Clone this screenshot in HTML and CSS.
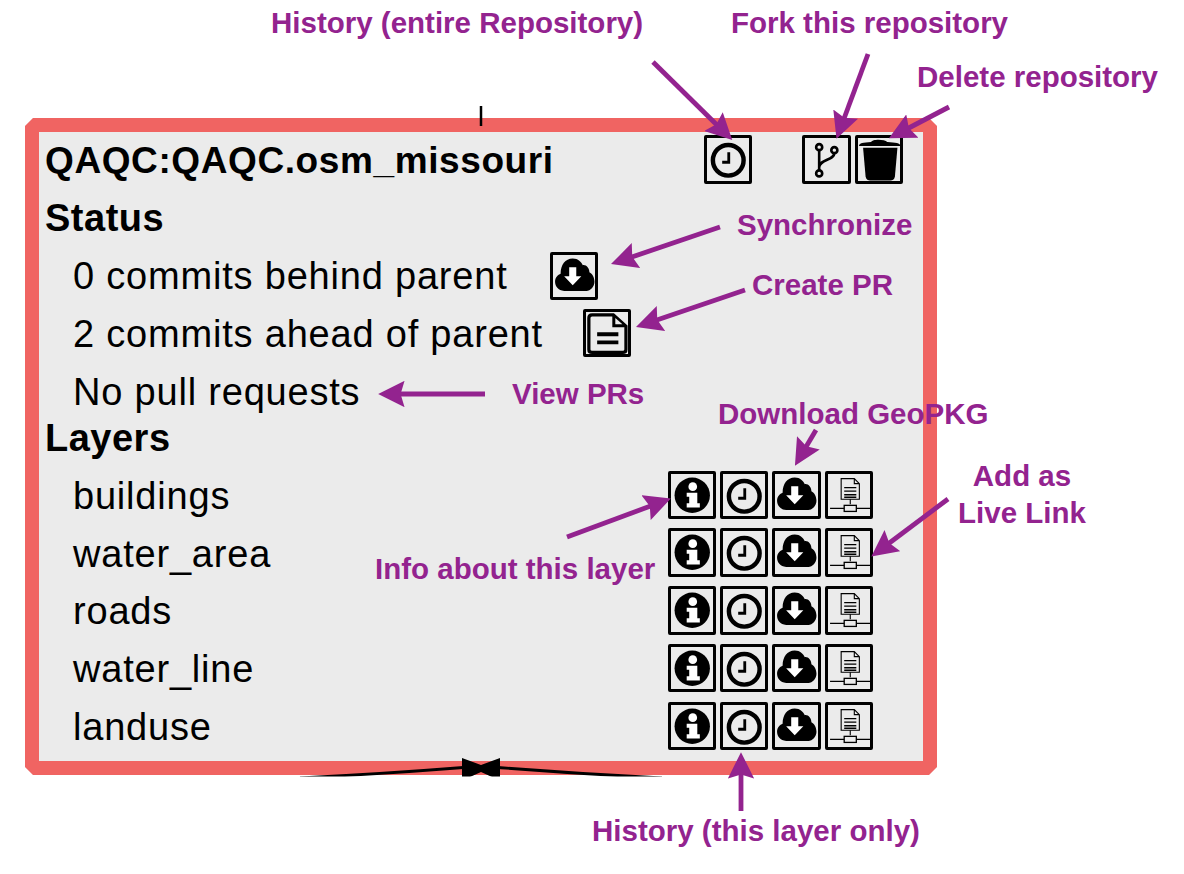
FILE: index.html
```html
<!DOCTYPE html>
<html lang="en">
<head>
<meta charset="utf-8">
<title>Repository</title>
<link rel="stylesheet" href="styles.css">
</head>
<body>
<svg class="defs" width="0" height="0" aria-hidden="true">
  <defs>
    <symbol id="i-clock" viewBox="0 0 48 48">
      <circle cx="24" cy="25" r="15.200" fill="none" stroke="#000" stroke-width="4.400"/>
      <path d="M24.500 17V27H18" fill="none" stroke="#000" stroke-width="2.800"/>
    </symbol>
    <symbol id="i-branch" viewBox="0 0 48 48">
      <g fill="none" stroke="#000" stroke-width="2.600">
        <circle cx="17" cy="12" r="3"/>
        <circle cx="32" cy="15" r="3"/>
        <circle cx="17" cy="38" r="3"/>
        <path d="M17 15V35M32 18C32 25 17 24 17 32"/>
      </g>
    </symbol>
    <symbol id="i-trash" viewBox="0 0 48 48">
      <path d="M4 11C4 8 8 7.500 16 7C17 4 29 4 32 7C40 7.500 45 8 45 11Z"/>
      <path d="M8 12.500H42L39.500 41C39 44 37 45 35 45H15C13 45 11 44 10.500 41Z"/>
    </symbol>
    <symbol id="i-cloud" viewBox="0 0 48 48">
      <path d="M14 38.500C8 38.500 5 33.500 5 29.500C5 25 8 22.500 10.500 21.500C10.500 13 15 6.500 22.500 6.500C28 6.500 31 10 32.500 13C36 12.500 39 16 39 20C42 21.500 44 25 44 29.500C44 34.500 40 38.500 36 38.500Z"/>
      <path d="M19 15H26V24H31L22.500 33L14 24H19Z" fill="#fff"/>
    </symbol>
    <symbol id="i-file" viewBox="0 0 48 48">
      <path d="M9 5.800H30L42.500 17V40C42.500 42 41 43 39.500 43H9C7 43 5.800 42 5.800 40V9C5.800 7 7 5.800 9 5.800Z" fill="none" stroke="#000" stroke-width="3.200"/>
      <path d="M29 6V18H43Z" fill="#000"/>
      <path d="M32 9V15H39Z" fill="#ebebeb"/>
      <path d="M14 25H35M14 33H35" stroke="#000" stroke-width="3.800"/>
    </symbol>
    <symbol id="i-info" viewBox="0 0 48 48">
      <circle cx="24" cy="24" r="17.500"/>
      <circle cx="24.500" cy="15.500" r="4.300" fill="#fff"/>
      <path d="M18.500 21.500H29V32H31.500V36H18.500V32H21V25.500H18.500Z" fill="#fff"/>
    </symbol>
    <symbol id="i-net" viewBox="0 0 48 48">
      <g fill="none" stroke="#000" stroke-width="1.100">
        <path d="M16 7.500H29L34 12.500V28H16ZM29 7.500V12.500H34"/>
        <path d="M19 16.500H31M19 20H31M19 23.500H31M19 26H31" stroke-width="1.300"/>
        <path d="M25 28V33M5 37H19M31 37H45"/>
        <rect x="19" y="34" width="12" height="6" stroke-width="1.300"/>
      </g>
    </symbol>
    <marker id="head" viewBox="0 0 10 10" refX="4" refY="5" markerWidth="5.500" markerHeight="5.500" orient="auto">
      <path d="M0 0L10 5L0 10L1.500 5Z" fill="#93238f"/>
    </marker>
    <clipPath id="card-bottom">
      <rect x="0" y="0" width="1184" height="776.500"/>
    </clipPath>
  </defs>
</svg>

<main class="stage">
  <section class="card">
    <header class="row title-row">
      <h1 class="title">QAQC:QAQC.osm_missouri</h1>
      <div class="title-actions">
        <svg class="icon"><use href="#i-clock"/></svg>
        <div class="group">
          <svg class="icon"><use href="#i-branch"/></svg>
          <svg class="icon"><use href="#i-trash"/></svg>
        </div>
      </div>
    </header>
    <h2 class="heading">Status</h2>
    <div class="row item"><span>0 commits behind parent</span><svg class="icon sync"><use href="#i-cloud"/></svg></div>
    <div class="row item"><span>2 commits ahead of parent</span><svg class="icon pr"><use href="#i-file"/></svg></div>
    <div class="row item"><span>No pull requests</span></div>
    <h2 class="heading layers-heading">Layers</h2>
    <ul class="layers">
      <li class="row item layer"><span>buildings</span><div class="group"><svg class="icon"><use href="#i-info"/></svg><svg class="icon"><use href="#i-clock"/></svg><svg class="icon"><use href="#i-cloud"/></svg><svg class="icon"><use href="#i-net"/></svg></div></li>
      <li class="row item layer"><span>water_area</span><div class="group"><svg class="icon"><use href="#i-info"/></svg><svg class="icon"><use href="#i-clock"/></svg><svg class="icon"><use href="#i-cloud"/></svg><svg class="icon"><use href="#i-net"/></svg></div></li>
      <li class="row item layer"><span>roads</span><div class="group"><svg class="icon"><use href="#i-info"/></svg><svg class="icon"><use href="#i-clock"/></svg><svg class="icon"><use href="#i-cloud"/></svg><svg class="icon"><use href="#i-net"/></svg></div></li>
      <li class="row item layer"><span>water_line</span><div class="group"><svg class="icon"><use href="#i-info"/></svg><svg class="icon"><use href="#i-clock"/></svg><svg class="icon"><use href="#i-cloud"/></svg><svg class="icon"><use href="#i-net"/></svg></div></li>
      <li class="row item layer"><span>landuse</span><div class="group"><svg class="icon"><use href="#i-info"/></svg><svg class="icon"><use href="#i-clock"/></svg><svg class="icon"><use href="#i-cloud"/></svg><svg class="icon"><use href="#i-net"/></svg></div></li>
    </ul>
  </section>

  <svg class="overlay" viewBox="0 0 1184 874" aria-hidden="true">
    <path class="tick" d="M481 106V126"/>
    <g clip-path="url(#card-bottom)">
      <path class="link" d="M300 778C360 775 420 771 470 767M492 767C542 771 602 775 662 778"/>
      <path class="bow" d="M462 758L481 765L500 758V777H492L481 772L470 777H462Z"/>
    </g>
    <g class="arrows">
      <path d="M653 62L721 129"/>
      <path d="M868 54L842 124"/>
      <path d="M949 107L903 131"/>
      <path d="M720 227L626 259"/>
      <path d="M745 290L651 322"/>
      <path d="M485 394H394"/>
      <path d="M816 430L803 452"/>
      <path d="M948 499L884 547"/>
      <path d="M567 537L656 504"/>
      <path d="M741 811V768"/>
    </g>
  </svg>

  <p class="note n-history">History (entire Repository)</p>
  <p class="note n-fork">Fork this repository</p>
  <p class="note n-delete">Delete repository</p>
  <p class="note n-sync">Synchronize</p>
  <p class="note n-pr">Create PR</p>
  <p class="note n-view">View PRs</p>
  <p class="note n-geo">Download GeoPKG</p>
  <p class="note n-live">Add as<br>Live Link</p>
  <p class="note n-info">Info about this layer</p>
  <p class="note n-layer">History (this layer only)</p>
</main>
</body>
</html>
```
FILE: styles.css
```css
* { box-sizing: border-box; }
html, body { margin: 0; padding: 0; background: #fff; }
body { font-family: "Liberation Sans", Arial, sans-serif; color: #000; overflow: hidden; }
.defs { position: absolute; }
.stage { position: relative; width: 1184px; height: 874px; overflow: hidden; padding: 118px 0 0 25px; }
.card {
  width: 912px;
  height: 657px;
  background: #ebebeb;
  border: 14.500px solid #f06462;
  clip-path: polygon(8px 0, calc(100% - 8px) 0, 100% 8px, 100% calc(100% - 8px), calc(100% - 8px) 100%, 8px 100%, 0 calc(100% - 8px), 0 8px);
  padding: 0 20px 0 6px;
  font-size: 38px;
  letter-spacing: 0.8px;
}
.row { display: flex; align-items: center; }
.title-row { height: 57px; }
.title { margin: 0; font-size: 37px; font-weight: 700; line-height: 1; letter-spacing: 0.6px; }
.title-actions { margin-left: auto; margin-bottom: 2px; display: flex; gap: 50px; }
.group { display: flex; gap: 3.800px; }
.heading { margin: 0; height: 58px; display: flex; align-items: center; font-size: 38px; font-weight: 700; letter-spacing: 0.5px; }
.layers-heading { height: 34px; margin-bottom: 11px; }
.item { height: 58px; padding-left: 28px; }
.icon {
  display: block;
  flex: none;
  width: 48.500px;
  height: 48.500px;
  outline: 3px solid #000;
  outline-offset: -3px;
  border-radius: 2px;
  fill: #000;
}
.sync { margin-left: 42px; }
.pr { margin-left: 40px; margin-bottom: 2px; }
.layers { list-style: none; margin: 0; padding: 0; }
.layer { height: 57.750px; padding-right: 30px; justify-content: space-between; }
.layer span { padding-top: 3px; }
.overlay { position: absolute; left: 0; top: 0; width: 1184px; height: 874px; }
.tick { stroke: #000; stroke-width: 2.500; fill: none; }
.link { stroke: #000; stroke-width: 2.800; fill: none; }
.bow { fill: #000; }
.arrows path { stroke: #93238f; stroke-width: 4.800; fill: none; marker-end: url(#head); }
.note { position: absolute; margin: 0; color: #93238f; font-size: 29.500px; font-weight: 700; line-height: 37px; white-space: nowrap; }
.n-history { left: 271px; top: 4px; }
.n-fork { left: 731px; top: 4px; }
.n-delete { left: 917px; top: 58px; }
.n-sync { left: 737px; top: 206px; }
.n-pr { left: 752px; top: 266px; }
.n-view { left: 512px; top: 375px; }
.n-geo { left: 718px; top: 395px; }
.n-live { left: 958px; top: 457px; text-align: center; width: 128px; }
.n-info { left: 375px; top: 550px; }
.n-layer { left: 592px; top: 812px; }
```
